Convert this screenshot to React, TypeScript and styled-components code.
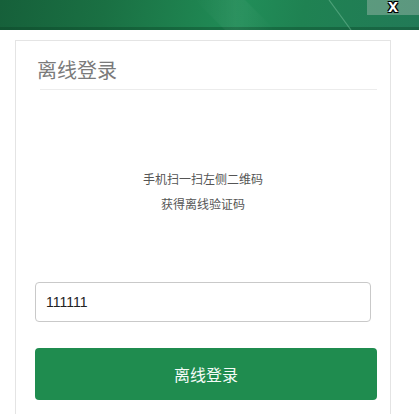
import React from "react";
import styled, { createGlobalStyle } from "styled-components";

const GlobalStyle = createGlobalStyle`
  html, body {
    margin: 0;
    padding: 0;
    background: #ffffff;
    overflow: hidden;
  }
  body {
    font-family: "Liberation Sans", "Noto Sans CJK SC", sans-serif;
  }
`;

const Window = styled.div`
  width: 419px;
  height: 414px;
  display: flex;
  flex-direction: column;
  overflow: hidden;
  background: #ffffff;
`;

const TitleStrip = styled.header`
  position: relative;
  height: 30px;
  flex: none;
  display: flex;
  justify-content: flex-end;
  align-items: flex-start;
  background: linear-gradient(
    100deg,
    #16603a 0%,
    #1a7043 25%,
    #1e824f 45%,
    #218d58 58%,
    #1f8252 72%,
    #227a57 100%
  );
  box-shadow: inset 0 -3px 0 rgba(10, 60, 35, 0.35);
`;

const Sheen = styled.svg`
  position: absolute;
  inset: 0;
  width: 100%;
  height: 100%;
  pointer-events: none;
`;

const CloseButton = styled.button`
  position: relative;
  width: 52px;
  height: 15px;
  border: none;
  padding: 0;
  margin: 0;
  background: rgba(190, 200, 195, 0.38);
  color: #ffffff;
  font-family: "Liberation Sans", Arial, sans-serif;
  font-weight: bold;
  font-size: 18px;
  line-height: 12px;
  display: flex;
  justify-content: center;
  align-items: flex-start;
  text-shadow: -1px -1px 0 #000, 1px -1px 0 #000, -1px 1px 0 #000, 1px 1px 0 #000;
  cursor: pointer;
`;

const Body = styled.main`
  flex: 1;
  display: flex;
  padding: 10px 0 0 15px;
`;

const Card = styled.section`
  width: 376px;
  height: 400px;
  box-sizing: border-box;
  border: 1px solid #e4e4e4;
  background: #ffffff;
  display: flex;
  flex-direction: column;
`;

const CardHead = styled.div`
  margin: 15px 13px 0 24px;
  padding-bottom: 5px;
  border-bottom: 1px solid #ececec;
`;

const CardTitle = styled.h2`
  margin: 0 0 0 -3px;
  font-family: "Noto Sans CJK SC", sans-serif;
  font-weight: 400;
  font-size: 20px;
  line-height: 28px;
  color: #7a7a7a;
`;

const Hint = styled.div`
  margin-top: 76px;
  text-align: center;
  font-family: "Noto Sans CJK SC", sans-serif;
  font-size: 12px;
  line-height: 25px;
  color: #555555;
`;

const Form = styled.form`
  margin: 66px 0 0 19px;
  display: flex;
  flex-direction: column;
  gap: 26px;
`;

const CodeInput = styled.input`
  width: 336px;
  height: 40px;
  box-sizing: border-box;
  border: 1px solid #c9c9c9;
  border-radius: 4px;
  padding: 0 10px;
  font-family: "Liberation Sans", Arial, sans-serif;
  font-size: 14px;
  color: #222222;
  background: #ffffff;
  outline: none;
`;

const SubmitButton = styled.button`
  width: 342px;
  height: 52px;
  border: none;
  border-radius: 4px;
  background: #1f8c4f;
  color: #f4fbf7;
  font-family: "Noto Sans CJK SC", sans-serif;
  font-size: 16px;
  cursor: pointer;
`;

export default function App() {
  return (
    <>
      <GlobalStyle />
      <Window>
        <TitleStrip>
          <Sheen viewBox="0 0 419 30" preserveAspectRatio="none">
            <defs>
              <linearGradient id="band" x1="0" y1="0" x2="1" y2="0">
                <stop offset="0" stopColor="#ffffff" stopOpacity="0" />
                <stop offset="0.5" stopColor="#ffffff" stopOpacity="0.05" />
                <stop offset="1" stopColor="#ffffff" stopOpacity="0" />
              </linearGradient>
            </defs>
            <polygon points="195,0 245,0 275,30 225,30" fill="url(#band)" />
            <line x1="329" y1="0" x2="351" y2="30" stroke="#8fd0ae" strokeOpacity="0.4" strokeWidth="1.2" />
          </Sheen>
          <CloseButton type="button" aria-label="关闭">x</CloseButton>
        </TitleStrip>
        <Body>
          <Card>
            <CardHead>
              <CardTitle>离线登录</CardTitle>
            </CardHead>
            <Hint>
              <div>手机扫一扫左侧二维码</div>
              <div>获得离线验证码</div>
            </Hint>
            <Form onSubmit={(e) => e.preventDefault()}>
              <CodeInput type="text" defaultValue="111111" />
              <SubmitButton type="submit">离线登录</SubmitButton>
            </Form>
          </Card>
        </Body>
      </Window>
    </>
  );
}
